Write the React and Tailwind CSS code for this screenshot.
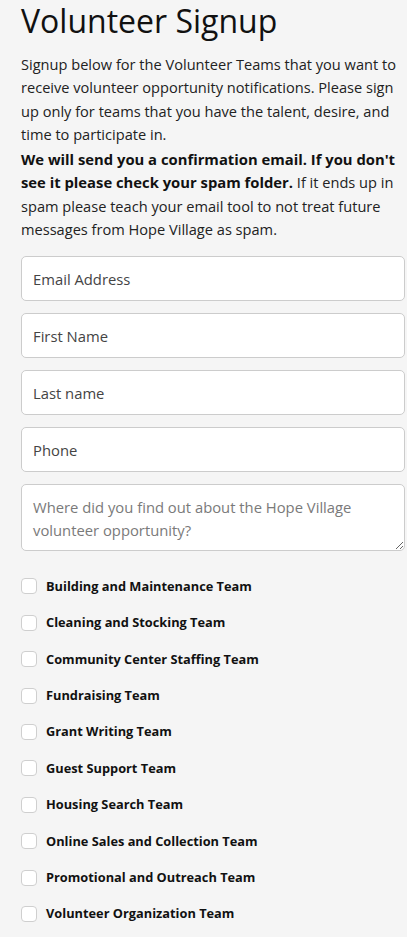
import React from "react";

const teams = [
  "Building and Maintenance Team",
  "Cleaning and Stocking Team",
  "Community Center Staffing Team",
  "Fundraising Team",
  "Grant Writing Team",
  "Guest Support Team",
  "Housing Search Team",
  "Online Sales and Collection Team",
  "Promotional and Outreach Team",
  "Volunteer Organization Team",
];

export default function App() {
  return (
    <div className="min-h-[937px] bg-[#f5f5f5] pl-[21px] pr-[2px] text-[#222]" style={{ fontFamily: '"Open Sans", sans-serif' }}>
      <h1 className="text-[32px] leading-[42px] text-[#111]">Volunteer Signup</h1>
      <p className="mt-[11px] text-[14.6px] leading-[23.3px]">
        Signup below for the Volunteer Teams that you want to receive volunteer opportunity notifications. Please sign up only for teams that you have the talent, desire, and time to participate in.
      </p>
      <p className="mt-[2px] text-[14.6px] leading-[23.3px]">
        <b className="font-bold text-[#111] text-[14.8px] leading-[23.3px]">We will send you a confirmation email. If you don't see it please check your spam folder.</b> If it ends up in spam please teach your email tool to not treat future messages from Hope Village as spam.
      </p>
      <form className="mt-[15px] flex flex-col gap-[12px]">
        {["Email Address", "First Name", "Last name", "Phone"].map((p) => (
          <input
            key={p}
            placeholder={p}
            className="h-[45px] w-full rounded-[5px] border border-[#cccccc] bg-white px-[11px] text-[14.8px] placeholder:text-[#444] outline-none"
          />
        ))}
        <textarea
          placeholder="Where did you find out about the Hope Village volunteer opportunity?"
          className="h-[67px] w-full rounded-[5px] border border-[#cccccc] bg-white px-[11px] pt-[11px] pb-[8px] text-[14.8px] leading-[23px] placeholder:text-[#7a7a7a] outline-none"
        />
        <div className="mt-[15px] flex flex-col gap-[20.4px]">
          {teams.map((t) => (
            <label key={t} className="flex items-center gap-[9px] h-[16px]">
              <span className="h-[16px] w-[16px] rounded-[4px] border border-[#cfcfcf] bg-white shrink-0" />
              <span className="text-[12.8px] font-bold text-[#111]">{t}</span>
            </label>
          ))}
        </div>
      </form>
    </div>
  );
}
